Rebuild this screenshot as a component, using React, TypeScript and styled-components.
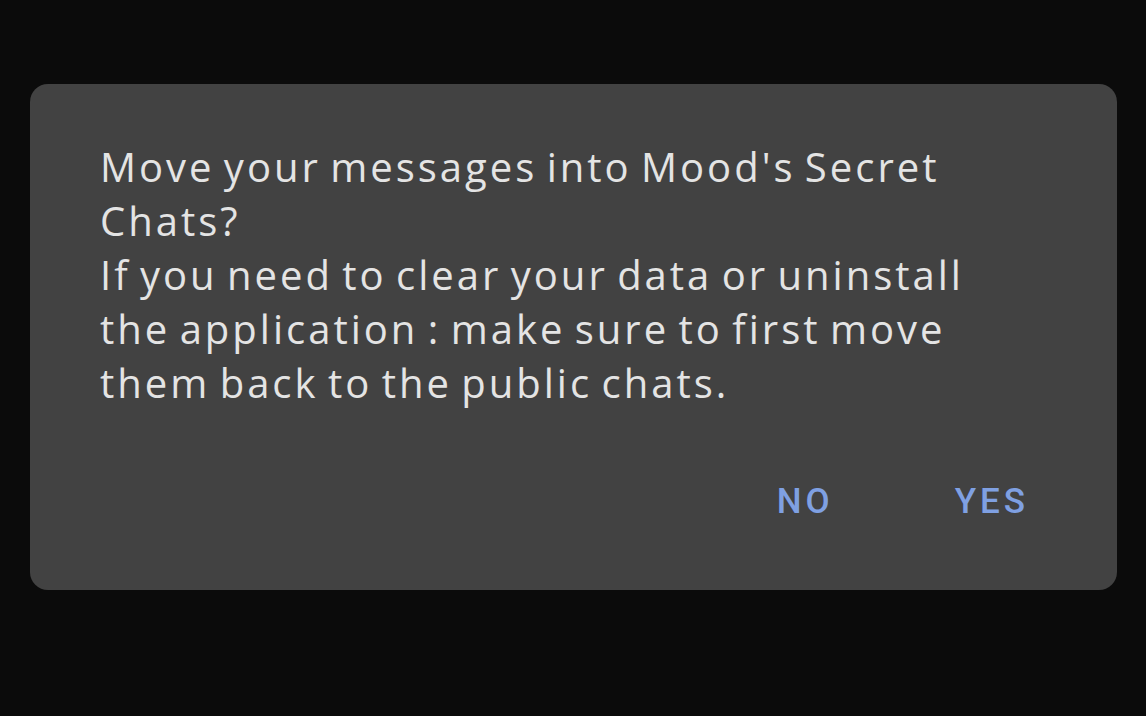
import React from "react";
import styled, { createGlobalStyle } from "styled-components";

const Global = createGlobalStyle`
  html, body { margin: 0; padding: 0; background: #0b0b0b; }
  #root { width: 1146px; height: 716px; }
`;

const Screen = styled.div`
  width: 1146px;
  height: 716px;
  box-sizing: border-box;
  padding: 84px 29px 0 30px;
  background: #0b0b0b;
`;

const Dialog = styled.div`
  box-sizing: border-box;
  height: 506px;
  background: #424242;
  border-radius: 18px;
  padding: 56px 88px 0 70px;
  display: flex;
  flex-direction: column;
`;

const Message = styled.div`
  font-family: "Open Sans", sans-serif;
  font-size: 40px;
  line-height: 54px;
  color: #e4e4e4;
  letter-spacing: 3px;
  word-spacing: -4px;
`;

const Line = styled.span`
  display: block;
  white-space: nowrap;
`;

const Actions = styled.div`
  display: flex;
  justify-content: flex-end;
  gap: 121px;
  margin-top: 72px;
`;

const Action = styled.button`
  background: none;
  border: none;
  padding: 0;
  font-family: Roboto, sans-serif;
  font-weight: 500;
  font-size: 35px;
  line-height: 40px;
  color: #7fa0e2;
  letter-spacing: 4px;
`;

const lines = [
  "Move your messages into Mood's Secret",
  "Chats?",
  "If you need to clear your data or uninstall",
  "the application : make sure to first move",
  "them back to the public chats.",
];

export default function App() {
  return (
    <>
      <Global />
      <Screen>
        <Dialog>
          <Message>
            {lines.map((l) => (
              <Line key={l}>{l}</Line>
            ))}
          </Message>
          <Actions>
            <Action>NO</Action>
            <Action>YES</Action>
          </Actions>
        </Dialog>
      </Screen>
    </>
  );
}
